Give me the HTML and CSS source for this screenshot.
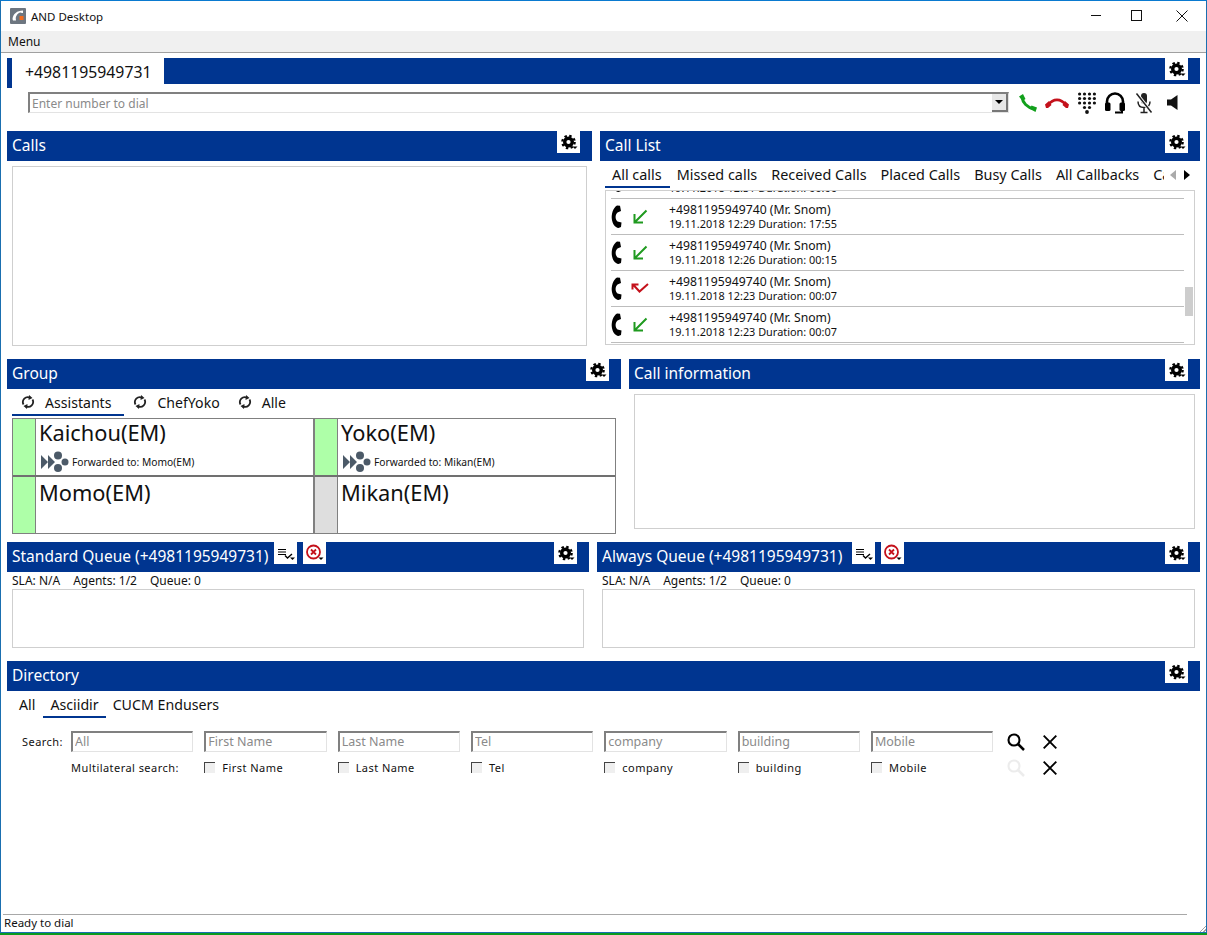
FILE: index.html
```html
<!DOCTYPE html>
<html lang="en">
<head>
    <meta charset="UTF-8">
    <title>AND Desktop</title>
    <link rel="stylesheet" href="styles.css">
</head>
<body>
    <svg class="icon-defs" aria-hidden="true">
        <defs>
            <symbol id="gear" viewBox="0 0 23 22">
                <circle cx="11.500" cy="11" r="3.800" fill="none" stroke="#000" stroke-width="3.400"/>
                <circle cx="11.500" cy="11" r="6.200" fill="none" stroke="#000" stroke-width="2.200" stroke-dasharray="2.430 2.440"/>
                <path d="M15.500 15.500h5l-2.500 2.500z" fill="#000"/>
            </symbol>
            <symbol id="handset" viewBox="0 0 11 23">
                <path d="M6 .5L9 .8 10 6 6.500 7.500C4 10 4 14 6.500 16.500l4 1L10 22l-2.500 1C4 22.500 1.500 19 .8 14 .3 9 2 3 6 .5z" fill="#000"/>
            </symbol>
            <symbol id="arrow-in" viewBox="0 0 16 16">
                <path d="M14.500 1.500L3 13M2.500 5v8.500H11" fill="none" stroke="#1f9a1f" stroke-width="2"/>
            </symbol>
            <symbol id="arrow-missed" viewBox="0 0 18 12">
                <path d="M1.500 2.500h6M1.500 1.500v6M2 2.500l6.500 7 8.500-7.500" fill="none" stroke="#c4111b" stroke-width="2"/>
            </symbol>
            <symbol id="refresh" viewBox="0 0 14 14">
                <path d="M2.500 9.500A5 5 0 0 1 9 2.600M11.500 4.500A5 5 0 0 1 5 11.400" fill="none" stroke="#222" stroke-width="1.800"/>
                <path d="M8 0l3.500 3L7.500 5zM6 14l-3.500-3 4-2z" fill="#222"/>
            </symbol>
            <symbol id="forward" viewBox="0 0 28 22">
                <path d="M0 4l7 7-7 7zM7 4l7 7-7 7z" fill="#4c5a68"/>
                <circle cx="17" cy="4.500" r="4" fill="#4c5a68"/>
                <circle cx="17" cy="17" r="4" fill="#4c5a68"/>
                <circle cx="24" cy="11" r="3.500" fill="#4c5a68"/>
            </symbol>
            <symbol id="list-check" viewBox="0 0 23 22">
                <path d="M4 7.500h8M4 10h8M4 12.500h8" stroke="#000" stroke-width="1.100"/>
                <path d="M11 13.500l2.500 2.500 4.500-4" fill="none" stroke="#000" stroke-width="1.400"/>
                <path d="M16 15.500h5l-2.500 2.500z" fill="#000"/>
            </symbol>
            <symbol id="queue-clear" viewBox="0 0 23 22">
                <circle cx="10.500" cy="10" r="6.500" fill="none" stroke="#c4111b" stroke-width="1.800"/>
                <path d="M8 7.500l5 5M13 7.500l-5 5" stroke="#c4111b" stroke-width="1.800"/>
                <path d="M15.500 15.500h5l-2.500 2.500z" fill="#000"/>
            </symbol>
            <symbol id="search" viewBox="0 0 18 18">
                <circle cx="7" cy="7" r="5.500" fill="none" stroke="currentColor" stroke-width="2.100"/>
                <path d="M11 11l6 6" stroke="currentColor" stroke-width="2.500"/>
            </symbol>
            <symbol id="cross" viewBox="0 0 14 14">
                <path d="M.7 .7l12.600 12.600M13.300 .7L.7 13.300" stroke="#000" stroke-width="1.900"/>
            </symbol>
        </defs>
    </svg>

    <div class="window">
        <div class="titlebar">
            <svg class="app-icon" viewBox="0 0 16 16">
                <rect width="16" height="16" rx="1" fill="#6d7680"/>
                <path d="M2.500 11C3 6 7 2.500 13 2.500v2.500c-1.500 0-2.500-.5-3-.5-2 .5-4 3-4.300 5.500L6 12.500H3z" fill="#fff"/>
                <rect x="9.500" y="8" width="4" height="4" fill="#f26b1d"/>
            </svg>
            <span class="title">AND Desktop</span>
            <div class="win-controls">
                <svg class="win-btn" viewBox="0 0 45 30"><path d="M23 14.500h10" stroke="#111"/></svg>
                <svg class="win-btn" viewBox="0 0 45 30"><rect x="18.500" y="9.500" width="10" height="10" fill="none" stroke="#111"/></svg>
                <svg class="win-btn" viewBox="0 0 45 30"><path d="M18.500 9.500l11 11M29.500 9.500l-11 11" stroke="#111"/></svg>
            </div>
        </div>
        <div class="menubar">Menu</div>

        <div class="dial-head">
            <div class="dial-accent"></div>
            <div class="dial-number">+4981195949731</div>
            <div class="dial-bar">
                <button class="tool tool-end"><svg><use href="#gear"/></svg></button>
            </div>
        </div>
        <div class="dial-row">
            <div class="dial-combo">
                <input class="dial-input" placeholder="Enter number to dial">
                <span class="combo-arrow"></span>
            </div>
            <div class="dial-icons">
                <svg class="ic-call" viewBox="0 0 18 18">
                    <path d="M3 3c.5 5.500 5 10.500 12 12" fill="none" stroke="#12a01c" stroke-width="2.800"/>
                    <path d="M0 2.500L4 0l2.500 5-3 2zM11 15l1.500-3.500 5.500 2-1.500 4.500z" fill="#12a01c"/>
                </svg>
                <svg class="ic-hang" viewBox="0 0 24 10">
                    <path d="M3 7C6 3 9 1.800 12 1.800S18 3 21 7" fill="none" stroke="#c4111b" stroke-width="2.800"/>
                    <path d="M0 6.500L4 3l2.500 4L3 10H1zM24 6.500L20 3l-2.500 4 3.500 3h2z" fill="#c4111b"/>
                </svg>
                <svg class="ic-keypad" viewBox="0 0 18 22" fill="#111">
                    <circle cx="1.600" cy="2" r="1.600"/><circle cx="6.500" cy="2" r="1.600"/><circle cx="11.500" cy="2" r="1.600"/><circle cx="16.400" cy="2" r="1.600"/>
                    <circle cx="1.600" cy="6.500" r="1.600"/><circle cx="6.500" cy="6.500" r="1.600"/><circle cx="11.500" cy="6.500" r="1.600"/><circle cx="16.400" cy="6.500" r="1.600"/>
                    <circle cx="1.600" cy="11" r="1.600"/><circle cx="6.500" cy="11" r="1.600"/><circle cx="11.500" cy="11" r="1.600"/><circle cx="16.400" cy="11" r="1.600"/>
                    <circle cx="6.500" cy="15.500" r="1.600"/><circle cx="11.500" cy="15.500" r="1.600"/><circle cx="9" cy="20" r="1.900"/>
                </svg>
                <svg class="ic-headset" viewBox="0 0 20 22">
                    <path d="M2 12V9.500a8 8 0 0 1 16 0V12" fill="none" stroke="#000" stroke-width="2.600"/>
                    <rect x="0" y="10.500" width="5.500" height="8.500" rx="1.500"/>
                    <rect x="14.500" y="10.500" width="5.500" height="8.500" rx="1.500"/>
                    <path d="M17 18v2.500H10" fill="none" stroke="#000" stroke-width="2"/>
                </svg>
                <svg class="ic-mic" viewBox="0 0 18 22">
                    <rect x="6" y="1" width="6" height="11" rx="3" fill="#222"/>
                    <path d="M3 9.500c0 4 2.500 6 6 6s6-2 6-6M9 15.500V20M5.500 20.500h7" fill="none" stroke="#222" stroke-width="1.500"/>
                    <path d="M1.500 1.500l15 19" stroke="#fff" stroke-width="3.500"/>
                    <path d="M1.500 1.500l15 19" stroke="#222" stroke-width="1.500"/>
                </svg>
                <svg class="ic-speaker" viewBox="0 0 11 15">
                    <path d="M0 4.500h4L10.500 0v15L4 10.500H0z" fill="#111"/>
                </svg>
            </div>
        </div>

        <div class="row row-calls">
            <section class="panel">
                <div class="panel-head">
                    <span class="panel-title">Calls</span>
                    <button class="tool tool-end"><svg><use href="#gear"/></svg></button>
                </div>
                <div class="panel-body"><div class="box box-calls"></div></div>
            </section>
            <section class="panel">
                <div class="panel-head">
                    <span class="panel-title">Call List</span>
                    <button class="tool tool-end"><svg><use href="#gear"/></svg></button>
                </div>
                <div class="call-tabs">
                    <div class="tabs tabs-clip">
                        <span class="tab active">All calls</span>
                        <span class="tab">Missed calls</span>
                        <span class="tab">Received Calls</span>
                        <span class="tab">Placed Calls</span>
                        <span class="tab">Busy Calls</span>
                        <span class="tab">All Callbacks</span>
                        <span class="tab">Callbacks</span>
                    </div>
                    <span class="tab-prev"></span>
                    <span class="tab-next"></span>
                </div>
                <div class="call-list">
                    <div class="call-row call-row-cut">
                        <svg class="ic-phone"><use href="#handset"/></svg>
                        <span class="call-dir"></span>
                        <div class="call-text">
                            <div>19.11.2018 12:31 Duration: 00:06</div>
                        </div>
                    </div>
                    <div class="call-row">
                        <svg class="ic-phone"><use href="#handset"/></svg>
                        <span class="call-dir"><svg class="ic-in"><use href="#arrow-in"/></svg></span>
                        <div class="call-text">
                            <div>+4981195949740 (Mr. Snom)</div>
                            <div>19.11.2018 12:29 Duration: 17:55</div>
                        </div>
                    </div>
                    <div class="call-row">
                        <svg class="ic-phone"><use href="#handset"/></svg>
                        <span class="call-dir"><svg class="ic-in"><use href="#arrow-in"/></svg></span>
                        <div class="call-text">
                            <div>+4981195949740 (Mr. Snom)</div>
                            <div>19.11.2018 12:26 Duration: 00:15</div>
                        </div>
                    </div>
                    <div class="call-row">
                        <svg class="ic-phone"><use href="#handset"/></svg>
                        <span class="call-dir"><svg class="ic-missed"><use href="#arrow-missed"/></svg></span>
                        <div class="call-text">
                            <div>+4981195949740 (Mr. Snom)</div>
                            <div>19.11.2018 12:23 Duration: 00:07</div>
                        </div>
                    </div>
                    <div class="call-row">
                        <svg class="ic-phone"><use href="#handset"/></svg>
                        <span class="call-dir"><svg class="ic-in"><use href="#arrow-in"/></svg></span>
                        <div class="call-text">
                            <div>+4981195949740 (Mr. Snom)</div>
                            <div>19.11.2018 12:23 Duration: 00:07</div>
                        </div>
                    </div>
                    <div class="scroll-thumb"></div>
                </div>
            </section>
        </div>

        <div class="row row-group">
            <section class="panel">
                <div class="panel-head">
                    <span class="panel-title">Group</span>
                    <button class="tool tool-end"><svg><use href="#gear"/></svg></button>
                </div>
                <div class="tabs group-tabs">
                    <span class="tab group-tab active"><svg class="ic-refresh"><use href="#refresh"/></svg>Assistants</span>
                    <span class="tab group-tab"><svg class="ic-refresh"><use href="#refresh"/></svg>ChefYoko</span>
                    <span class="tab group-tab"><svg class="ic-refresh"><use href="#refresh"/></svg>Alle</span>
                </div>
                <div class="agents">
                    <div class="agent">
                        <div class="agent-state"></div>
                        <div class="agent-info">
                            <div class="agent-name">Kaichou(EM)</div>
                            <div class="agent-forward"><svg class="ic-forward"><use href="#forward"/></svg>Forwarded to: Momo(EM)</div>
                        </div>
                    </div>
                    <div class="agent">
                        <div class="agent-state"></div>
                        <div class="agent-info">
                            <div class="agent-name">Yoko(EM)</div>
                            <div class="agent-forward"><svg class="ic-forward"><use href="#forward"/></svg>Forwarded to: Mikan(EM)</div>
                        </div>
                    </div>
                    <div class="agent">
                        <div class="agent-state"></div>
                        <div class="agent-info">
                            <div class="agent-name">Momo(EM)</div>
                        </div>
                    </div>
                    <div class="agent">
                        <div class="agent-state offline"></div>
                        <div class="agent-info">
                            <div class="agent-name">Mikan(EM)</div>
                        </div>
                    </div>
                </div>
            </section>
            <section class="panel">
                <div class="panel-head">
                    <span class="panel-title">Call information</span>
                    <button class="tool tool-end"><svg><use href="#gear"/></svg></button>
                </div>
                <div class="panel-body"><div class="box box-info"></div></div>
            </section>
        </div>

        <div class="row row-queues">
            <section class="panel">
                <div class="panel-head">
                    <span class="panel-title queue-title">Standard Queue (+4981195949731)</span>
                    <button class="tool"><svg><use href="#list-check"/></svg></button>
                    <button class="tool"><svg><use href="#queue-clear"/></svg></button>
                    <button class="tool tool-end"><svg><use href="#gear"/></svg></button>
                </div>
                <div class="queue-stats"><span>SLA: N/A</span><span>Agents: 1/2</span><span>Queue: 0</span></div>
                <div class="box box-queue"></div>
            </section>
            <section class="panel">
                <div class="panel-head">
                    <span class="panel-title queue-title always-title">Always Queue (+4981195949731)</span>
                    <button class="tool"><svg><use href="#list-check"/></svg></button>
                    <button class="tool"><svg><use href="#queue-clear"/></svg></button>
                    <button class="tool tool-end"><svg><use href="#gear"/></svg></button>
                </div>
                <div class="queue-stats"><span>SLA: N/A</span><span>Agents: 1/2</span><span>Queue: 0</span></div>
                <div class="box box-queue"></div>
            </section>
        </div>

        <section class="panel directory">
            <div class="panel-head">
                <span class="panel-title">Directory</span>
                <button class="tool tool-end"><svg><use href="#gear"/></svg></button>
            </div>
            <div class="tabs dir-tabs">
                <span class="tab">All</span>
                <span class="tab active">Asciidir</span>
                <span class="tab">CUCM Endusers</span>
            </div>
            <div class="search-grid">
                <span class="search-label">Search:</span>
                <input class="search-input" placeholder="All">
                <input class="search-input" placeholder="First Name">
                <input class="search-input" placeholder="Last Name">
                <input class="search-input" placeholder="Tel">
                <input class="search-input" placeholder="company">
                <input class="search-input" placeholder="building">
                <input class="search-input" placeholder="Mobile">
                <svg class="ic-search"><use href="#search"/></svg>
                <svg class="ic-cross"><use href="#cross"/></svg>

                <span></span>
                <span class="multi-label">Multilateral search:</span>
                <label class="check"><input type="checkbox">First Name</label>
                <label class="check"><input type="checkbox">Last Name</label>
                <label class="check"><input type="checkbox">Tel</label>
                <label class="check"><input type="checkbox">company</label>
                <label class="check"><input type="checkbox">building</label>
                <label class="check"><input type="checkbox">Mobile</label>
                <svg class="ic-search disabled"><use href="#search"/></svg>
                <svg class="ic-cross"><use href="#cross"/></svg>
            </div>
        </section>

        <div class="statusbar">Ready to dial</div>
    </div>
</body>
</html>
```

FILE: styles.css
```css
html, body {
    margin: 0;
    padding: 0;
    height: 100%;
    overflow: hidden;
}
html {
    background: #0a9a20;
}
body {
    font-family: "Noto Sans", "Open Sans", sans-serif;
    color: #111;
}
.icon-defs {
    width: 0;
    height: 0;
    display: block;
}
.window {
    position: relative;
    box-sizing: border-box;
    width: 1207px;
    height: 933px;
    background: #fff;
    display: flex;
    flex-direction: column;
    border-top: 1px solid #0a7ad0;
    border-left: 1px solid #1a6fb0;
    border-right: 1px solid #1a6fb0;
    border-bottom: 1px solid #1a6fb0;
}
/* resize grip in the corner */
.window::after {
    content: '';
    position: absolute;
    right: 0;
    bottom: 0;
    width: 8px;
    height: 8px;
    background: repeating-linear-gradient(135deg, transparent 0 1.500px, #a0a0a0 1.500px 2.500px);
    clip-path: polygon(100% 0, 100% 100%, 0 100%);
}
.titlebar {
    height: 30px;
    display: flex;
    align-items: center;
    flex-shrink: 0;
}
.app-icon {
    width: 16px;
    height: 16px;
    margin-left: 9px;
}
.title {
    font-size: 11.500px;
    margin-left: 5px;
}
.win-controls {
    margin-left: auto;
    display: flex;
    margin-right: 3px;
}
.win-btn {
    width: 45px;
    height: 30px;
}
.menubar {
    height: 21px;
    line-height: 21px;
    background: #f0f0f0;
    border-bottom: 1px solid #a0a0a0;
    font-size: 12px;
    padding-left: 7px;
    flex-shrink: 0;
}

/* number header */
.dial-head {
    display: flex;
    height: 30px;
    margin: 5px 6px 0 6px;
    flex-shrink: 0;
}
.dial-accent {
    width: 5px;
    background: #003590;
}
.dial-number {
    width: 152px;
    padding-left: 13px;
    box-sizing: border-box;
    font-size: 15.800px;
    line-height: 28px;
}
.dial-bar {
    flex: 1;
    height: 26px;
    background: #003590;
    display: flex;
}
.dial-row {
    display: flex;
    margin: 4px 6px 0 27px;
    height: 21px;
    flex-shrink: 0;
}
.dial-combo {
    width: 981px;
    height: 21px;
    display: flex;
    box-sizing: border-box;
    border-top: 2px solid #808080;
    border-left: 2px solid #808080;
    border-bottom: 1px solid #e3e3e3;
    border-right: 1px solid #e3e3e3;
}
.dial-input {
    flex: 1;
    border: 0;
    padding: 0 0 0 2px;
    outline: 0;
    font: 12px "Noto Sans", sans-serif;
}
.dial-input::placeholder, .search-input::placeholder {
    color: #8a8a8a;
}
.combo-arrow {
    width: 16px;
    height: 18px;
    box-sizing: border-box;
    background: #e8e8e8;
    border-right: 2px solid #777;
    border-bottom: 2px solid #777;
    display: flex;
    align-items: center;
    justify-content: center;
}
.combo-arrow::after {
    content: '';
    border-top: 4px solid #000;
    border-left: 4px solid transparent;
    border-right: 4px solid transparent;
}
.dial-icons {
    display: flex;
    align-items: center;
    margin-left: 10px;
}
.dial-icons svg {
    flex-shrink: 0;
}
.ic-call { width: 18px; height: 18px; }
.ic-hang { width: 24px; height: 10px; margin-left: 8px; }
.ic-keypad { width: 18px; height: 22px; margin-left: 9px; }
.ic-headset { width: 20px; height: 22px; margin-left: 9px; }
.ic-mic { width: 18px; height: 22px; margin-left: 10px; }
.ic-speaker { width: 11px; height: 15px; margin-left: 14px; }

/* panels */
.row {
    display: grid;
    margin: 0 6px;
    flex-shrink: 0;
}
.row-calls {
    grid-template-columns: 585px 600px;
    column-gap: 8px;
    margin-top: 18px;
}
.row-group {
    grid-template-columns: 614px 571px;
    column-gap: 8px;
    margin-top: 13px;
}
.row-queues {
    grid-template-columns: 582px 603px;
    column-gap: 8px;
    margin-top: 8px;
}
.panel-head {
    height: 30px;
    background: #003590;
    display: flex;
    align-items: flex-start;
}
.panel-title {
    color: #fff;
    font-size: 15.500px;
    line-height: 29px;
    padding-left: 5px;
}
.tool {
    width: 23px;
    height: 22px;
    padding: 0;
    border: 0;
    background: #fff;
    margin-left: 6px;
}
.always-title + .tool {
    margin-left: 10px;
}
.tool svg {
    display: block;
    width: 23px;
    height: 22px;
}
.tool.tool-end {
    margin-left: auto;
    margin-right: 12px;
}
.panel-body {
    padding: 5px 5px 0;
}
.box {
    box-sizing: border-box;
    border: 1px solid #cfcfcf;
}
.box-calls { height: 180px; }
.box-info { height: 135px; }
.box-queue { height: 59px; margin: 0 5px; }

/* tabs */
.tabs {
    display: flex;
}
.tab {
    font-size: 14.400px;
    line-height: 27px;
    height: 25px;
    padding: 0 7px;
    white-space: nowrap;
    border-bottom: 2px solid transparent;
}
.tab.active {
    border-bottom-color: #003590;
}
.call-tabs {
    display: flex;
    align-items: center;
    height: 27px;
    margin: 0 0 2px 5px;
}
.call-tabs .tab:first-child {
    padding-right: 8px;
}
.tabs-clip {
    width: 559px;
    overflow: hidden;
}
.tab-prev, .tab-next {
    width: 0;
    height: 0;
    border-top: 5px solid transparent;
    border-bottom: 5px solid transparent;
}
.tab-prev {
    border-right: 6px solid #aaa;
    margin-left: 6px;
}
.tab-next {
    border-left: 6px solid #000;
    margin-left: 8px;
}
.call-list {
    position: relative;
    box-sizing: border-box;
    height: 155px;
    margin: 0 5px 0 5px;
    border: 1px solid #cfcfcf;
    overflow: hidden;
}
.call-row {
    box-sizing: border-box;
    height: 36px;
    margin: 0 10px 0 5px;
    border-bottom: 1px solid #bdbdbd;
    display: flex;
    align-items: center;
}
.call-row-cut {
    margin-top: -28px;
}
.call-row-cut .call-text {
    padding-top: 14px;
}
.ic-phone {
    width: 11px;
    height: 23px;
    flex-shrink: 0;
}
.call-dir {
    width: 47px;
    padding-left: 10px;
    box-sizing: border-box;
    display: flex;
    flex-shrink: 0;
    height: 16px;
    align-items: center;
}
.ic-in { width: 16px; height: 16px; }
.ic-missed { width: 18px; height: 12px; margin-left: -1px; margin-top: -2px; }
.call-text {
    font-size: 12.200px;
    line-height: 14px;
}
.call-text div:last-child {
    font-size: 10.900px;
}
.scroll-thumb {
    position: absolute;
    right: 1px;
    top: 96px;
    width: 8px;
    height: 29px;
    background: #cdcdcd;
}

/* group */
.group-tabs {
    margin: 0 0 2px 5px;
    height: 27px;
}
.group-tab {
    display: flex;
    align-items: center;
    font-size: 14.100px;
    height: 24px;
    padding: 1px 13px 0 9px;
}
.group-tab:nth-child(2) {
    padding-right: 9px;
}
.ic-refresh {
    width: 14px;
    height: 14px;
    margin-right: 10px;
}
.agents {
    display: grid;
    grid-template-columns: 302px 300px;
    grid-template-rows: 58px 56px;
    width: 604px;
    height: 116px;
    margin-left: 5px;
    box-sizing: border-box;
    border: 1px solid #808080;
}
.agent {
    display: flex;
    box-sizing: border-box;
}
.agent:nth-child(odd) {
    border-right: 2px solid #808080;
}
.agent:nth-child(-n+2) {
    border-bottom: 2px solid #707070;
}
.agent:nth-child(n+3) .agent-info {
    padding-top: 2px;
}
.agent-state {
    width: 22px;
    background: #aeffa8;
    border-right: 1px solid #808080;
    flex-shrink: 0;
}
.agent-state.offline {
    background: #dedede;
}
.agent-info {
    padding: 0 0 0 3px;
}
.agent-name {
    font-size: 21.800px;
    line-height: 28px;
}
.agent-forward {
    display: flex;
    align-items: center;
    font-size: 10.250px;
    margin-top: 4px;
    padding-left: 2px;
}
.ic-forward {
    width: 28px;
    height: 22px;
    margin-right: 3px;
}

/* queue */
.queue-stats {
    display: flex;
    gap: 13px;
    font-size: 12px;
    line-height: 17px;
    padding-left: 5px;
}
.directory {
    margin: 13px 6px 0;
    flex-shrink: 0;
}
.dir-tabs {
    margin-left: 5px;
}
.dir-tabs .tab {
    font-size: 14.200px;
}
.dir-tabs .tab:first-child {
    padding-right: 8px;
}
.search-grid {
    display: grid;
    grid-template-columns: 38px repeat(7, 122.330px) 24px 24px;
    column-gap: 11px;
    align-items: center;
    margin: 13px 0 0 15px;
    grid-auto-rows: 21px;
    row-gap: 5px;
}
.search-label, .multi-label, .check {
    font-size: 11px;
    letter-spacing: .45px;
    white-space: nowrap;
}
.search-input {
    width: 100%;
    height: 21px;
    box-sizing: border-box;
    border-top: 2px solid #808080;
    border-left: 2px solid #808080;
    border-bottom: 1px solid #e3e3e3;
    border-right: 1px solid #e3e3e3;
    padding: 0 0 1px 2px;
    outline: 0;
    font: 12.500px "Noto Sans", sans-serif;
}
.check {
    display: flex;
    align-items: center;
}
.check input {
    appearance: none;
    width: 11px;
    height: 11px;
    margin: 0 7px 0 0;
    background: #efefef;
    border-top: 1px solid #444;
    border-left: 1px solid #444;
    box-sizing: border-box;
}
.ic-search {
    width: 18px;
    height: 18px;
    margin-left: 3px;
    color: #000;
}
.ic-search.disabled {
    color: #ececec;
}
.ic-cross {
    width: 14px;
    height: 14px;
    margin-left: 4px;
}
.statusbar {
    margin-top: auto;
    margin-left: 2px;
    margin-right: 19px;
    border-top: 1px solid #a8a8a8;
    height: 17px;
    line-height: 16px;
    font-size: 11.500px;
    padding-left: 1px;
    flex-shrink: 0;
}
```
